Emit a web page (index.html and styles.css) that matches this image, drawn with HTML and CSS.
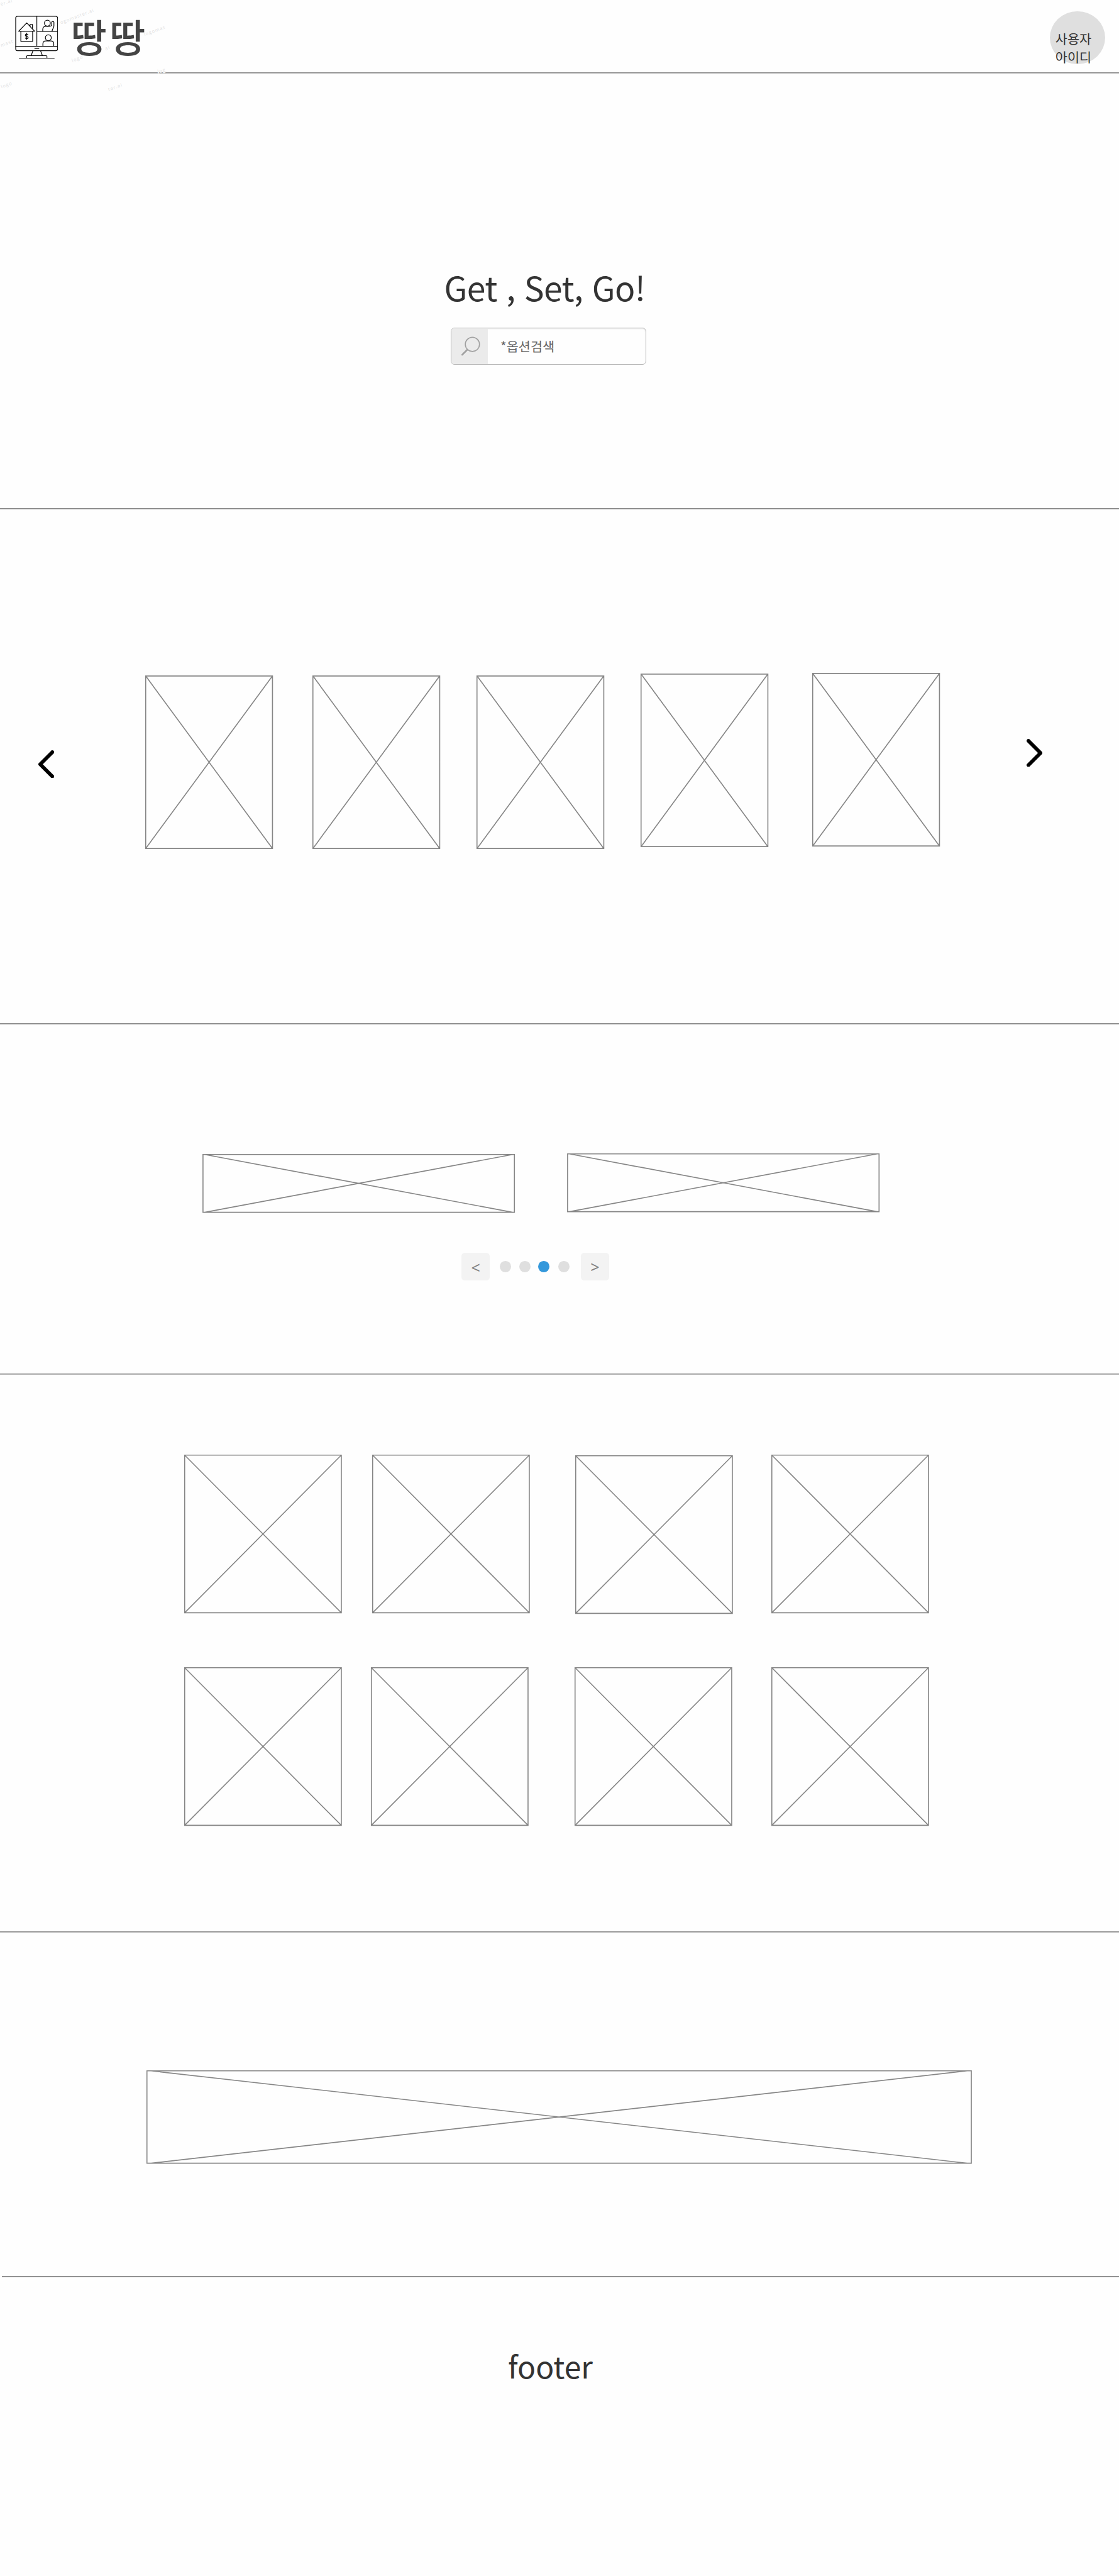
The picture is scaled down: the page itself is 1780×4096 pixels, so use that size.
FILE: index.html
```html
<!DOCTYPE html>
<html lang="ko">
<head>
<meta charset="utf-8">
<title>땅땅</title>
<link rel="stylesheet" href="styles.css">
</head>
<body>
<svg class="defs" aria-hidden="true">
  <symbol id="ph-card" viewBox="0 0 274 372" overflow="visible"><path d="M1 1H273V371H1ZL273 371M273 1L1 371"/></symbol>
  <symbol id="ph-banner" viewBox="0 0 670.4 126" overflow="visible"><path d="M1 1H669.4V125H1ZM5 1L665.4 125M665.4 1L5 125"/></symbol>
  <symbol id="ph-tile" viewBox="0 0 338 340" overflow="visible"><path d="M1 1H337V339H1ZL337 339M337 1L1 339"/></symbol>
  <symbol id="ph-wide" viewBox="0 0 1770 200" overflow="visible"><path d="M1 1H1769V199H1ZM10 1L1760 199M1760 1L10 199"/></symbol>
</svg>

<header class="header">
  <svg class="watermark" viewBox="0 0 1200 660" aria-hidden="true">
    <text transform="translate(6 36) rotate(-17)">er.ai</text>
    <text transform="translate(392 156) rotate(-21)">ogomaster.ai</text>
    <text transform="translate(8 302) rotate(-20)">mast</text>
    <text transform="translate(930 232) rotate(-20)">logomas</text>
    <text transform="translate(466 400) rotate(-21)">logo</text>
    <text transform="translate(680 324) rotate(-20)">ai</text>
    <text transform="translate(10 568) rotate(-20)">logo</text>
    <text transform="translate(700 586) rotate(-20)">ter.ai</text>
    <text class="over-line" transform="translate(1016 470) rotate(-14)">log</text>
  </svg>
  <svg class="logo" viewBox="96 100 278 278" aria-hidden="true">
    <rect x="100" y="104" width="270" height="221" rx="12"/>
    <path d="M100 297H370M236 104V297M236 201H370M223 311H249M211 326L199 357M260 326L272 357M170 374V362Q170 357 175 357H296Q301 357 301 362V374M123 374H348"/>
    <path d="M119 200L171 146L222 200ZM133 201V265H209V201M192 167V156H208V184"/>
    <path d="M179 223Q176 218 171 218Q162 218 162 226Q162 231 171 233Q180 235 180 241Q180 248 171 248Q164 248 162 243M171 212V254"/>
    <circle cx="304" cy="148" r="19"/>
    <path d="M274 200V188Q274 168 294 168H318Q332 168 332 156V143Q332 137 339 137Q346 137 346 143V164Q346 172 342 179Q336 187 334 200"/>
    <circle cx="310" cy="242" r="19"/>
    <path d="M275 296V281Q275 262 294 262H326Q345 262 345 281V296"/>
  </svg>
  <h1 class="brand">땅땅</h1>
  <div class="user">사용자<br>아이디</div>
</header>

<div class="divider"></div>
<section class="hero">
  <h2 class="hero-title">Get , Set, Go!</h2>
  <div class="search">
    <span class="search-icon">
      <svg viewBox="0 0 42 42" aria-hidden="true"><circle cx="25" cy="17" r="15.3"/><path d="M14 28.5L3 39.5"/></svg>
    </span>
    <span class="search-text">*옵션검색</span>
  </div>
</section>

<div class="divider"></div>
<section class="carousel">
  <svg class="arrow prev" viewBox="0 0 34 60"><path d="M30 4L4 30L30 56"/></svg>
  <svg class="ph card c1"><use href="#ph-card"/></svg>
  <svg class="ph card c2"><use href="#ph-card"/></svg>
  <svg class="ph card c3"><use href="#ph-card"/></svg>
  <svg class="ph card c4"><use href="#ph-card"/></svg>
  <svg class="ph card c5"><use href="#ph-card"/></svg>
  <svg class="arrow next" viewBox="0 0 34 60"><path d="M4 4L30 30L4 56"/></svg>
</section>

<div class="divider"></div>
<section class="banners">
  <div class="banner-row">
    <svg class="ph banner b1"><use href="#ph-banner"/></svg>
    <svg class="ph banner b2"><use href="#ph-banner"/></svg>
  </div>
  <div class="pager">
    <span class="page-btn page-prev">&lt;</span>
    <span class="dot d1"></span>
    <span class="dot d2"></span>
    <span class="dot d3 active"></span>
    <span class="dot d4"></span>
    <span class="page-btn page-next">&gt;</span>
  </div>
</section>

<div class="divider"></div>
<section class="tiles">
  <div class="tile-row">
    <svg class="ph tile"><use href="#ph-tile"/></svg>
    <svg class="ph tile t2"><use href="#ph-tile"/></svg>
    <svg class="ph tile t3"><use href="#ph-tile"/></svg>
    <svg class="ph tile t4"><use href="#ph-tile"/></svg>
  </div>
  <div class="tile-row">
    <svg class="ph tile"><use href="#ph-tile"/></svg>
    <svg class="ph tile t6"><use href="#ph-tile"/></svg>
    <svg class="ph tile t7"><use href="#ph-tile"/></svg>
    <svg class="ph tile t8"><use href="#ph-tile"/></svg>
  </div>
</section>

<div class="divider"></div>
<section class="promo">
  <svg class="ph wide"><use href="#ph-wide"/></svg>
</section>

<div class="divider inset"></div>
<footer class="footer">footer</footer>
</body>
</html>
```
FILE: styles.css
```css
* { box-sizing: border-box; }

body {
  margin: 0;
  width: 1780px;
  height: 4096px;
  overflow: hidden;
  background: #fefefe;
  color: #333;
  font-family: "Noto Sans CJK KR", "Noto Sans", sans-serif;
}

svg { display: block; flex: none; }
h1, h2 { margin: 0; font-weight: 400; }

.defs { position: absolute; width: 0; height: 0; }

.divider {
  height: 2px;
  background: linear-gradient(#868686 50%, #b4b4b4 50%);
}
.divider.inset { margin-left: 3px; }

/* Header */
.header {
  position: relative;
  display: flex;
  align-items: flex-start;
  height: 115px;
  padding: 0 22.3px 0 23.7px;
}
.logo {
  width: 68.7px;
  height: 68.7px;
  margin-top: 24.7px;
  fill: none;
  stroke: #080808;
  stroke-width: 5;
  stroke-linejoin: round;
  stroke-linecap: round;
}
.brand {
  margin: 12px 0 0 20px;
  font-size: 62.3px;
  line-height: 90px;
  font-weight: 500;
  letter-spacing: 4.3px;
  color: #444;
}
.user {
  width: 87.7px;
  height: 84.6px;
  margin: 17.6px 0 0 auto;
  padding: 29px 0 0 8.8px;
  border-radius: 50%;
  background: #dfdfdf;
  font-size: 20.77px;
  line-height: 29.7px;
  white-space: nowrap;
}
.watermark {
  position: absolute;
  left: 0;
  top: 0;
  z-index: 1;
  width: 296.7px;
  height: 163.2px;
  overflow: visible;
  font-family: "Open Sans", sans-serif;
  font-size: 30px;
  letter-spacing: 4px;
  fill: #dedede;
}
.watermark .over-line {
  paint-order: stroke;
  stroke: #fefefe;
  stroke-width: 5px;
}

/* Search */
.hero { height: 691px; padding: 298.9px 0 0 706.6px; }
.hero-title { font-size: 53.4px; line-height: 80px; letter-spacing: -0.58px; }
.search {
  display: flex;
  align-items: stretch;
  width: 311px;
  height: 59.1px;
  margin: 24.8px 0 0 10.4px;
  overflow: hidden;
  border: 1.5px solid #b8b8b8;
  border-radius: 6px;
  box-shadow: inset 0 1px 2px #e4e4e4;
}
.search-icon {
  width: 58px;
  padding: 13px 0 0 14.6px;
  background: #ebebeb;
}
.search-icon svg {
  width: 31px;
  height: 31px;
  fill: none;
  stroke: #a0a0a0;
  stroke-width: 2.2;
}
.search-icon path { stroke-width: 3.6; stroke-linecap: round; }
.search-text {
  margin-left: 20px;
  font-size: 20.77px;
  line-height: 56px;
  color: #666;
}

/* Placeholder boxes */
.ph { overflow: visible; fill: none; stroke: #868686; stroke-width: 2.2; }
.card { width: 203.2px; height: 276px; }
.banner { width: 497.2px; height: 93.4px; }
.tile { width: 250.7px; height: 252.2px; }
.wide { width: 1312.8px; height: 148.4px; }

/* Carousel */
.carousel {
  display: flex;
  align-items: flex-start;
  height: 817px;
  padding-top: 259.6px;
}
.arrow {
  width: 25.2px;
  height: 44.5px;
  fill: none;
  stroke: #000;
  stroke-width: 8;
  stroke-linecap: round;
  stroke-linejoin: round;
}
.prev { margin: 123.1px 0 0 60.8px; }
.next { margin: 105.3px 0 0 137.8px; }
.c1 { margin: 4.4px 0 0 145.3px; }
.c2 { margin: 4.4px 0 0 62.6px; }
.c3 { margin: 4.4px 0 0 57.9px; }
.c4 { margin: 1.5px 0 0 57.6px; }
.c5 { margin-left: 69.8px; }

/* Banners and pager */
.banners { height: 555px; padding-top: 204.6px; }
.banner-row { display: flex; align-items: flex-start; padding-left: 321.7px; }
.b1 { margin-top: 1.4px; }
.b2 { margin-left: 82.9px; }
.pager {
  display: flex;
  align-items: center;
  margin: 63.6px 0 0 734.3px;
}
.page-btn {
  width: 44.5px;
  height: 44.5px;
  border-radius: 5.5px;
  background: #f3f3f3;
  color: #808080;
  font-family: "Noto Sans", sans-serif;
  font-size: 25px;
  line-height: 44.5px;
  text-align: center;
}
.page-prev { padding-top: 1.5px; }
.page-next { margin-left: 17.8px; }
.dot { width: 17.8px; height: 17.8px; border-radius: 50%; background: #dfdfdf; }
.dot.active { background: #3498db; }
.d1 { margin-left: 16.3px; }
.d2 { margin-left: 13.3px; }
.d3 { margin-left: 11.9px; }
.d4 { margin-left: 14.8px; }

/* Tiles */
.tiles {
  display: flex;
  flex-direction: column;
  gap: 84.5px;
  height: 885px;
  padding: 126.7px 0 0 292.5px;
}
.tile-row { display: flex; align-items: flex-start; }
.t2 { margin-left: 48.4px; }
.t3 { margin: 1.6px 0 0 72.8px; }
.t4 { margin-left: 61.1px; }
.t6 { margin-left: 47.2px; }
.t7 { margin-left: 72.8px; }
.t8 { margin-left: 62.3px; }

/* Promo and footer */
.promo { height: 546px; padding: 218.8px 0 0 233.2px; }
.footer {
  height: 475px;
  padding: 104.7px 0 0 808px;
  font-size: 48px;
  line-height: 70px;
}
```
